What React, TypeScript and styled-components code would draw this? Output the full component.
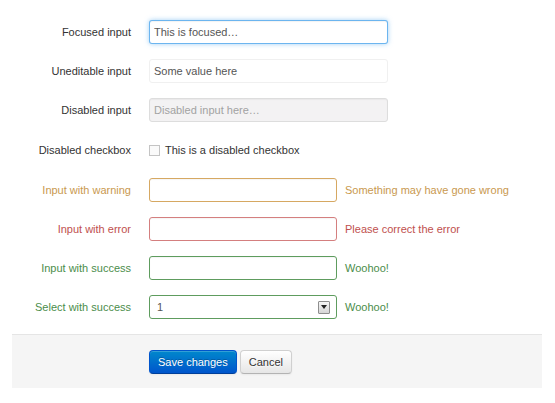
import styled, { createGlobalStyle } from 'styled-components';

const GlobalStyle = createGlobalStyle`
  body {
    margin: 0;
    background: #fff;
    font-family: 'Liberation Sans', Arial, sans-serif;
    font-size: 11px;
    color: #333;
  }
`;

type State = 'warning' | 'error' | 'success' | undefined;

const textColors = {
  warning: '#c9994f',
  error: '#c0504e',
  success: '#4b8d4b',
};

const borderColors = {
  warning: '#d6a862',
  error: '#d47f7f',
  success: '#5e9c5e',
};

const Form = styled.form`
  width: 530px;
  padding: 20px 0 0 12px;
`;

const ControlGroup = styled.div<{ $tall?: boolean }>`
  display: flex;
  align-items: center;
  min-height: ${(p) => (p.$tall ? '26px' : '24px')};
  margin-bottom: 15px;
`;

const ControlLabel = styled.label<{ $state?: State }>`
  width: 119px;
  margin-right: 18px;
  text-align: right;
  line-height: 24px;
  color: ${(p) => (p.$state ? textColors[p.$state] : '#333')};
`;

const TextInput = styled.input<{ $state?: State; $wide?: boolean }>`
  box-sizing: border-box;
  width: ${(p) => (p.$wide ? '239px' : '188px')};
  height: 24px;
  margin: 0;
  padding: 0 4px;
  font-family: inherit;
  font-size: 11px;
  color: #555;
  background: #fff;
  border: 1px solid ${(p) => (p.$state ? borderColors[p.$state] : '#ccc')};
  border-radius: 3px;
  box-shadow: inset 0 1px 1px rgba(0, 0, 0, 0.04);
  outline: none;

  &::placeholder {
    color: #555;
  }
`;

const FocusedInput = styled(TextInput)`
  border-color: rgba(82, 168, 236, 0.85);
  box-shadow: inset 0 1px 1px rgba(0, 0, 0, 0.05), 0 0 5px rgba(82, 168, 236, 0.55);
`;

const DisabledInput = styled(TextInput)`
  background: #f3f2f3;
  border-color: #ddd;

  &::placeholder {
    color: #a2a2a2;
  }
`;

const Uneditable = styled.span`
  box-sizing: border-box;
  display: flex;
  align-items: center;
  width: 239px;
  height: 24px;
  padding: 0 4px;
  color: #555;
  background: #fff;
  border: 1px solid #f0f0f0;
  border-radius: 3px;
`;

const CheckboxLabel = styled.label`
  display: flex;
  align-items: center;
  height: 24px;
  color: #333;
`;

const CheckBox = styled.span`
  box-sizing: border-box;
  width: 11px;
  height: 11px;
  margin-right: 5px;
  background: #fafafa;
  border: 1px solid #c4c4c4;
`;

const SelectBox = styled.div<{ $state?: State }>`
  box-sizing: border-box;
  display: flex;
  align-items: center;
  justify-content: space-between;
  width: 188px;
  height: 24px;
  padding: 0 6px 0 7px;
  color: #555;
  background: #fff;
  border: 1px solid ${(p) => (p.$state ? borderColors[p.$state] : '#ccc')};
  border-radius: 3px;
`;

const SelectArrow = styled.span`
  box-sizing: border-box;
  display: flex;
  align-items: center;
  justify-content: center;
  width: 12px;
  height: 13px;
  background: linear-gradient(#f6f6f6, #d6d6d6);
  border: 1px solid #8e8e8e;
  border-radius: 1px;

  &::after {
    content: '';
    border-left: 3px solid transparent;
    border-right: 3px solid transparent;
    border-top: 4px solid #222;
  }
`;

const HelpInline = styled.span<{ $state?: State }>`
  margin-left: 8px;
  color: ${(p) => (p.$state ? textColors[p.$state] : '#999')};
`;

const FormActions = styled.div`
  display: flex;
  gap: 3px;
  margin-top: 15px;
  padding: 15px 0 14px 137px;
  background: #f5f5f5;
  border-top: 1px solid #e5e5e5;
`;

const Button = styled.button<{ $primary?: boolean }>`
  box-sizing: border-box;
  height: 24px;
  padding: 0 8px;
  font-family: inherit;
  font-size: 11px;
  border-radius: 4px;
  cursor: pointer;
  color: ${(p) => (p.$primary ? '#fff' : '#333')};
  text-shadow: ${(p) =>
    p.$primary ? '0 -1px 0 rgba(0, 0, 0, 0.25)' : '0 1px 1px rgba(255, 255, 255, 0.75)'};
  background: ${(p) =>
    p.$primary ? 'linear-gradient(#0088cc, #0055cc)' : 'linear-gradient(#ffffff, #e6e6e6)'};
  border: 1px solid ${(p) => (p.$primary ? '#0055cc' : '#d0d0d0')};
  border-bottom-color: ${(p) => (p.$primary ? '#003f99' : '#b3b3b3')};
  box-shadow: inset 0 1px 0 rgba(255, 255, 255, 0.2), 0 1px 2px rgba(0, 0, 0, 0.05);
`;

const App = () => {
  return (
    <>
      <GlobalStyle />
      <Form onSubmit={(e) => e.preventDefault()}>
        <ControlGroup>
          <ControlLabel>Focused input</ControlLabel>
          <FocusedInput $wide placeholder='This is focused…' />
        </ControlGroup>
        <ControlGroup>
          <ControlLabel>Uneditable input</ControlLabel>
          <Uneditable>Some value here</Uneditable>
        </ControlGroup>
        <ControlGroup>
          <ControlLabel>Disabled input</ControlLabel>
          <DisabledInput $wide disabled placeholder='Disabled input here…' />
        </ControlGroup>
        <ControlGroup $tall>
          <ControlLabel>Disabled checkbox</ControlLabel>
          <CheckboxLabel>
            <CheckBox />
            This is a disabled checkbox
          </CheckboxLabel>
        </ControlGroup>
        <ControlGroup>
          <ControlLabel $state='warning'>Input with warning</ControlLabel>
          <TextInput $state='warning' />
          <HelpInline $state='warning'>Something may have gone wrong</HelpInline>
        </ControlGroup>
        <ControlGroup>
          <ControlLabel $state='error'>Input with error</ControlLabel>
          <TextInput $state='error' />
          <HelpInline $state='error'>Please correct the error</HelpInline>
        </ControlGroup>
        <ControlGroup>
          <ControlLabel $state='success'>Input with success</ControlLabel>
          <TextInput $state='success' />
          <HelpInline $state='success'>Woohoo!</HelpInline>
        </ControlGroup>
        <ControlGroup>
          <ControlLabel $state='success'>Select with success</ControlLabel>
          <SelectBox $state='success'>
            <span>1</span>
            <SelectArrow />
          </SelectBox>
          <HelpInline $state='success'>Woohoo!</HelpInline>
        </ControlGroup>
        <FormActions>
          <Button $primary type='submit'>
            Save changes
          </Button>
          <Button type='button'>Cancel</Button>
        </FormActions>
      </Form>
    </>
  );
};

export default App;
